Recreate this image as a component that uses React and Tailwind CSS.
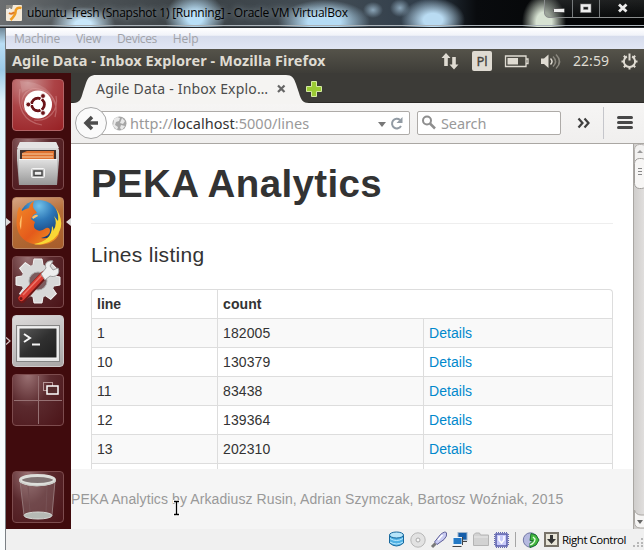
import React from "react";

const ubuntu = "font-['Noto_Sans','Open_Sans',sans-serif]";
const segoe = "font-['Open_Sans','Noto_Sans',sans-serif]";

function TitleBar() {
  return (
    <div className="relative h-[28px] shrink-0 border-b border-[#25292d] overflow-hidden bg-[radial-gradient(ellipse_32px_17px_at_83px_24px,#c9e8fb_25%,transparent),radial-gradient(ellipse_30px_26px_at_195px_18px,#b9e0f8_25%,transparent),radial-gradient(ellipse_46px_22px_at_324px_22px,#b5dcf5_35%,transparent),radial-gradient(ellipse_10px_8px_at_373px_10px,#8ba5b8,transparent),radial-gradient(ellipse_10px_9px_at_400px_8px,#8ba5b8,transparent),radial-gradient(ellipse_32px_22px_at_433px_20px,#b9dbf2_30%,transparent),radial-gradient(ellipse_22px_28px_at_544px_22px,#d7e2d2_35%,transparent),linear-gradient(90deg,#6b6e70,#4e5458_12%,#3b4145_30%,#434d55_50%,#303d4a_66%,#090b0e_74%,#020303)]">
      <div className={"flex h-[26px] items-center pl-[6px] border-b border-[#aab2b8] " + segoe}>
        <svg width="16" height="16" viewBox="0 0 16 16" className="shrink-0">
          <rect width="16" height="16" rx="1" fill="#f5ead8" />
          <path d="M0 0h7l-1 4H0z" fill="#8b8983" />
          <path d="M1 5l4 1M4 3l-2 4" stroke="#eee" strokeWidth="1.5" />
          <path d="M15.500 3c-4-1-6 1-6 4s-2 5-5 8" fill="none" stroke="#ef9c22" strokeWidth="2.600" />
          <path d="M3 8q3 2 5-1" fill="none" stroke="#df7924" strokeWidth="2" />
        </svg>
        <span className="ml-[5px] text-[12px] leading-[26px] whitespace-nowrap text-black tracking-[-0.22px] [text-shadow:0_0_6px_#d7e8f2aa]">ubuntu_fresh (Snapshot 1) [Running] - Oracle VM VirtualBox</span>
      </div>
      <div className="absolute top-[-4px] left-[544px] flex h-[22px] w-[104px] rounded-b-[5px] border border-[#8a8d8d] bg-[linear-gradient(#62656555,#15181955)]">
        <div className="w-[28px] border-r border-[#777b7d]">
          <svg width="27" height="20"><rect x="8.500" y="11.500" width="11" height="4" rx="1" fill="#eee" stroke="#555" /></svg>
        </div>
        <div className="w-[27px] border-r border-[#777b7d]">
          <svg width="26" height="20"><rect x="9" y="8.500" width="7.500" height="5.500" fill="none" stroke="#555" strokeWidth="4" /><rect x="9" y="8.500" width="7.500" height="5.500" fill="none" stroke="#eee" strokeWidth="2.600" /></svg>
        </div>
        <svg width="46" height="20"><path d="M19 7.500l7.500 7m0-7l-7.500 7" stroke="#eee" strokeWidth="2.800" /></svg>
      </div>
    </div>
  );
}

function MenuBar() {
  return (
    <div className={"flex h-[21px] shrink-0 items-center gap-[16px] pl-[8px] text-[12px] text-[#a0a2a8] bg-[linear-gradient(#ffffff,#f1f3f9_35%,#d6dcec_38%,#e1e6f4)] " + segoe}>
      <span className="tracking-[-0.25px]">Machine</span><span className="tracking-[-0.3px]">View</span><span className="tracking-[-0.4px]">Devices</span><span className="tracking-[-0.1px]">Help</span>
    </div>
  );
}

function Panel() {
  return (
    <div className={"flex h-[24px] shrink-0 items-center pl-[6px] text-[#dfdbd2] bg-[linear-gradient(#55534a,#3e3d38)] " + ubuntu}>
      <span className="w-[432px] whitespace-nowrap text-[14.500px] font-bold tracking-[0.09px]">Agile Data - Inbox Explorer - Mozilla Firefox</span>
      <svg width="200" height="24" fill="none" className="shrink-0 overflow-visible">
        <path d="M2 4l4.500 5H3.800v8H.2V9h-2.700zM10 20.500l-4.500-5h2.700V8h3.600v7.500h2.700z" fill="#dfdbd2" />
        <rect x="28" y="2" width="20" height="20" rx="2" fill="#dfdbd2" />
        <path d="M61.500 7h20.500v10.500H61.500zM82.500 10h1.500v4.500h-1.500" stroke="#dfdbd2" strokeWidth="1.300" />
        <rect x="63.500" y="9" width="10.500" height="6.500" fill="#dfdbd2" />
        <path d="M97 9.500h3l4.500-4V19l-4.500-4h-3z" fill="#dfdbd2" />
        <path d="M106.500 9.500q3 3 0 6" stroke="#dfdbd2" strokeWidth="1.500" />
        <path d="M109 7.500q5 5 0 10M112 5.500q7 7 0 14" stroke="#8b887f" strokeWidth="1.500" />
        <g stroke="#dfdbd2" strokeWidth="2" transform="translate(185.500 12.500)">
          <path d="M-2.600-5A5.600 5.600 0 1 0 2.600-5M0-8v7" />
          <path d="M-8 0h3M5 0h3M0 5v3M-5.700 5.700l2-2M5.700 5.700l-2-2M-5.700-5.700l2 2M5.700-5.700l-2 2" />
        </g>
        <text x="38" y="17" textAnchor="middle" fontSize="13" fill="#45433d" stroke="#45433d" strokeWidth=".3">Pl</text>
        <text x="129" y="17" fontSize="14" textLength="36" fill="#dfdbd2">22:59</text>
      </svg>
    </div>
  );
}

const tones = {
  wine: "border-[#7d4c4e] bg-[radial-gradient(ellipse_at_30%_0%,#9a7173,#5b2a2e_45%,#4b1418)]",
  red: "border-[#b36466] bg-[radial-gradient(circle_at_30%_5%,#c98f8f,#ac4346_45%,#972024)]",
  orange: "border-[#b88462] bg-[linear-gradient(160deg,#d7a583,#b66d37_45%,#a65c2b)]",
  grey: "border-[#cfcaca] bg-[linear-gradient(160deg,#dcdada,#a9a6a6)]",
};

function Tile({ children, tone = "wine", className = "" }) {
  return (
    <div className={"h-[52px] w-[52px] shrink-0 overflow-hidden rounded-[4px] border " + tones[tone] + " " + className}>
      <svg width="52" height="52" viewBox="0 0 52 52" className="-ml-px -mt-px" fill="none">{children}</svg>
    </div>
  );
}

const gearTeeth = [0, 45, 90, 135, 180, 225, 270, 315];

function Launcher() {
  return (
    <div className="relative flex w-[65px] shrink-0 flex-col gap-[7px] bg-[#400b0d] pl-[6px] pt-[6px]">
      <Tile tone="red">
        <path d="M8 2q33 1 36 27q-5-14-18-18q-10-3-16 3z" fill="#f2cccc" opacity=".2" />
        <path d="M14 33C4 22 14 7 27 10s20 13 16 28M8 10c-3 18 3 33 22 36M44 17c3 14-7 26-22 24" stroke="#e4a7a7" strokeOpacity=".4" strokeWidth="1.200" />
        <circle cx="26" cy="25.500" r="14" fill="#fff" />
        <circle cx="26" cy="25.500" r="6.300" stroke="#6b1418" strokeWidth="3" />
        <path d="M26 25.500h-9M26 25.500l4.500-8M26 25.500l4.500 8" stroke="#fff" strokeWidth="1.200" />
        <circle cx="26" cy="25.500" r="4.800" fill="#fff" />
        <g fill="#6b1418" stroke="#fff" strokeWidth=".8"><circle cx="16.300" cy="25.500" r="2.400" /><circle cx="31" cy="17" r="2.400" /><circle cx="31" cy="34" r="2.400" /></g>
      </Tile>
      <Tile>
        <defs><linearGradient id="metal" x1="0" y1="0" x2="0" y2="1"><stop stopColor="#e2e2e2" /><stop offset="1" stopColor="#979797" /></linearGradient></defs>
        <path d="M8 4h36l3 8v10l-2 25H7L5 22V12z" fill="url(#metal)" />
        <path d="M8 4h36l3 6H5z" fill="#e4e4e4" />
        <path d="M8 12h36v9H8z" fill="#43322c" />
        <path d="M10 21v-6l5-2h27v8z" fill="#df7230" /><path d="M10 16h31M10 19h31" stroke="#f7cfa5" />
        <path d="M7 21h38v26H7z" fill="url(#metal)" /><path d="M7 21.500h38" stroke="#f5f5f5" />
        <rect x="19.500" y="30.500" width="13" height="9" rx="1" fill="#ccc" stroke="#f4f4f4" />
        <rect x="22" y="33" width="8" height="4.500" fill="#eee" stroke="#444" strokeWidth="1.500" />
      </Tile>
      <Tile tone="orange">
        <defs>
          <radialGradient id="globe" cx=".5" cy=".15" r=".8"><stop stopColor="#72c1e9" /><stop offset=".45" stopColor="#2e78b8" /><stop offset="1" stopColor="#173b76" /></radialGradient>
          <linearGradient id="fox" x1="0" y1="0" x2="1" y2="1"><stop stopColor="#f38b28" /><stop offset=".55" stopColor="#e45a1b" /><stop offset="1" stopColor="#f0a224" /></linearGradient>
        </defs>
        <circle cx="27" cy="23" r="20" fill="url(#globe)" />
        <path d="M7 10q2 1 3 4 3-2 7-3 1-5 5-7-2 5 0 8 2 2 3 4-4 1-5 4l-1 2 4 3q-3 6 2 8 4 2 9-2 4-1 4 3 0 5-9 7 8 2 14-7 2-5 1-10 4 8 3 13C43 47 29 50 18 46 7 42 3 31 5 20q0-6 2-10z" fill="url(#fox)" />
        <path d="M43 10q9 12 5 23-4 11-17 14-6 1-9 0 18-3 18-18 2 2 1 5 5-7 1-15l4 5q1-8-3-14z" fill="#f8d735" />
        <path d="M20 20q5-4 6-1l-5 3zM10 18q-4 8-1 15" fill="#ffc06a" />
      </Tile>
      <Tile>
        <g transform="translate(26 25)" fill="#d8d8d8" stroke="#f2f2f2">
          {gearTeeth.map((a) => <path key={a} d="M-5.500-13l1.500-9h8l1.500 9z" transform={`rotate(${a})`} />)}
          <circle r="17" stroke="none" />
          <circle r="9" fill="#7c5b5d" stroke="#aaa" />
        </g>
        <path d="M10 43L32 19" stroke="#6e1817" strokeWidth="8" strokeLinecap="round" />
        <path d="M9.500 42L32 18" stroke="#d63b32" strokeWidth="6" strokeLinecap="round" />
        <path d="M11 39L30 19" stroke="#ed766a" strokeWidth="1.500" />
        <path d="M29 18l5-6c-2-5 2-8 7-7l-3 5 3 4 5-2c3 6-3 10-8 8l-5 4z" fill="#eee" stroke="#9d9d9d" />
        <circle cx="9" cy="42.500" r="1.500" fill="#6e1817" />
      </Tile>
      <Tile tone="grey">
        <defs><linearGradient id="screen" x1="0" y1="0" x2="1" y2="1"><stop stopColor="#5a5a5a" /><stop offset=".5" stopColor="#303030" /><stop offset="1" stopColor="#1f1f1f" /></linearGradient></defs>
        <rect x="4.500" y="10.500" width="43" height="36" fill="#e6e6e6" stroke="#858585" />
        <rect x="7" y="13" width="38" height="30" fill="url(#screen)" stroke="#f8f8f8" />
        <path d="M12 19l6 4-6 4M20 29.500h8" stroke="#f5f5f5" strokeWidth="2" />
      </Tile>
      <Tile>
        <path d="M26.500 2v48M2 26.500h48" stroke="#967173" />
        <rect x="31.500" y="8.500" width="9" height="8" stroke="#b89899" /><rect x="35" y="12" width="11" height="8" fill="#552b2d" stroke="#fff" strokeWidth="1.500" />
      </Tile>
      <Tile className="mt-[38px]">
        <path d="M8 10l4 34q14 6 28 0l3-34z" fill="#a69292" fillOpacity=".3" stroke="#937577" />
        <path d="M16 15l2 26M35 15l-1 26" stroke="#775255" />
        <ellipse cx="26" cy="44.500" rx="14" ry="3.500" fill="#b6bab5" stroke="#d7d8d5" />
        <ellipse cx="25.500" cy="9" rx="17" ry="4.500" fill="#817474" stroke="#dedfdb" strokeWidth="3" />
        <path d="M8 9v2q16 8 35 0V9" stroke="#c9cac6" strokeWidth="1" />
      </Tile>
      <div className="absolute left-0 top-[145px] h-0 w-0 border-y-[4px] border-l-[5px] border-y-transparent border-l-[#ddd]" />
      <div className="absolute right-0 top-[145px] h-0 w-0 border-y-[4px] border-r-[5px] border-y-transparent border-r-[#ddd]" />
      <svg className="absolute left-0 top-[263px]" width="6" height="10" fill="none"><path d="M0 1.500l4 3.500-4 3.500" stroke="#d9cccc" strokeWidth="1.200" /></svg>
    </div>
  );
}

function Tabs() {
  return (
    <div className="relative h-[30px] shrink-0 bg-[#3c3b37]">
      <svg className="absolute left-0 top-0" width="573" height="31">
        <path d="M0 29.500h573" stroke="#2c2b28" />
        <path d="M0 31v-1h2c7 0 8-4 10-11l3-9c2-6 5-8 10-8h190c6 0 8 3 10 9l3 9c2 7 4 10 10 10h3v1z" fill="#f5f4f2" />
        <path d="M207 12.500l6.500 6.500m0-6.500L207 19" stroke="#666" strokeWidth="2.200" />
        <path d="M240.500 8.500h5v5h5v5h-5v5h-5v-5h-5v-5h5z" fill="#9bcb34" stroke="#d4eaa2" />
      </svg>
      <span className={"absolute left-[25px] top-[6px] text-[14px] leading-[20px] whitespace-nowrap text-[#4c4c4c] tracking-[0.2px] " + ubuntu}>Agile Data - Inbox Explo…</span>
    </div>
  );
}

function NavBar() {
  return (
    <div className={"flex h-[41px] shrink-0 items-center border-b border-[#aaa7a3] bg-[linear-gradient(#f6f5f4,#f0efee)] text-[14.500px] " + ubuntu}>
      <div className="relative ml-[18px] mt-[-1px] flex h-[24px] w-[321px] items-center rounded-[2px] border border-[#aeaba8] bg-white pl-[40px]">
        <div className="absolute left-[-15px] top-[-5px] flex h-[32px] w-[32px] items-center justify-center rounded-full border border-[#a6a6a6] bg-[#fafafa]">
          <svg width="18" height="18" fill="none"><path d="M16 9H5M10 3L4 9l6 6" stroke="#4c4c4c" strokeWidth="3.500" /></svg>
        </div>
        <svg className="absolute left-[22px] top-[4px]" width="15" height="15"><circle cx="7.500" cy="7.500" r="7" fill="#a6a6a6" /><path d="M2 3l3-2 3 1-1 3-3 1-1 3 3 2-1 3-4-4zM10 2l3 3-2 3-3-1zM9 9l4 1-3 4-2-2z" fill="#e9e9e9" /></svg>
        <span className="mt-[2px] whitespace-nowrap text-[#999] tracking-[0.03px]">http://<span className="text-[#333]">localhost</span>:5000/lines</span>
        <svg className="absolute right-[4px] top-[3px]" width="30" height="16" fill="none"><path d="M3 7h8l-4 5z" fill="#777" /><path d="M25 5a4.800 4.800 0 1 0 1 6" stroke="#929ba4" strokeWidth="2" /><path d="M27.500 2v6h-6z" fill="#929ba4" /></svg>
      </div>
      <div className="ml-[7px] mt-[-1px] flex h-[24px] w-[144px] items-center gap-[5px] rounded-[2px] border border-[#aeaba8] bg-white pl-[4px] text-[#999]">
        <svg width="14" height="15" fill="none"><circle cx="5" cy="5.500" r="4" stroke="#8e8e8e" strokeWidth="2" /><path d="M8 8.500l5 5" stroke="#8e8e8e" strokeWidth="2.500" /></svg>
        <span className="mt-[2px] tracking-[-0.1px]">Search</span>
      </div>
      <svg width="83" height="40" fill="none" className="shrink-0"><path d="M17.500 15.500l4 4.500-4 4.500M23.500 15.500l4 4.500-4 4.500" stroke="#3f3f3f" strokeWidth="2.200" /><path d="M42.500 4v32" stroke="#c5c6cb" /><path d="M57.500 14.500h13M57.500 19.500h13M57.500 24.500h13" stroke="#484848" strokeWidth="3" strokeLinecap="round" /></svg>
    </div>
  );
}

const rows = [["1", "182005"], ["10", "130379"], ["11", "83438"], ["12", "139364"], ["13", "202310"]];

function Page() {
  return (
    <div className="flex min-h-0 flex-1 bg-white font-['Liberation_Sans',sans-serif] text-[14px] text-[#333]">
      <div className="flex w-[562px] shrink-0 flex-col">
        <div className="flex h-[325px] flex-col overflow-hidden pl-[20px] pr-[20px]">
          <h1 className="h-[80px] shrink-0 border-b border-[#eee] pt-[20px] text-[38.500px] font-bold leading-[40px] tracking-[0.36px]">PEKA Analytics</h1>
          <p className="pt-[16px] text-[21px] leading-[30px] tracking-[0.28px]">Lines listing</p>
          <div className="mt-[19px] flex-1 rounded-t-[4px] border border-b-0 border-[#ddd]">
            <div className="flex h-[28px] font-bold leading-[28px]"><div className="w-[126px] border-r border-[#ddd] pl-[5px]">line</div><div className="pl-[5px] tracking-[0.1px]">count</div></div>
            {rows.map(([line, count], i) => (
              <div key={line} className={"flex h-[29px] border-t border-[#ddd] leading-[28px] " + (i % 2 ? "bg-white" : "bg-[#f9f9f9]")}>
                <div className="w-[126px] border-r border-[#ddd] pl-[5px]">{line}</div>
                <div className="w-[206px] border-r border-[#ddd] pl-[5px] tracking-[0.1px]">{count}</div>
                <div className="pl-[5px] text-[#0088cc] tracking-[0.05px]">Details</div>
              </div>
            ))}
            <div className="flex h-[6px] border-t border-[#ddd]"><div className="w-[126px] border-r border-[#ddd]" /><div className="w-[206px] border-r border-[#ddd]" /></div>
          </div>
        </div>
        <div className="flex-1 whitespace-nowrap bg-[#f5f5f5] pt-[20px] leading-[20px] tracking-[0.096px] text-[#999]">PEKA Analytics by Arkadiusz Rusin, Adrian Szymczak, Bartosz Woźniak, 2015</div>
      </div>
      <div className="flex w-[11px] shrink-0 flex-col overflow-hidden border-l border-[#aaa7a3] bg-[linear-gradient(90deg,#cfcdcb,#e0dedd)]">
        <svg width="11" height="386" fill="none">
          <rect x=".5" y=".5" width="12" height="22" rx="5" fill="#f2f1f0" stroke="#b4b1ae" /><path d="M3 9l3-3 3 3z" fill="#999" />
          <rect x=".5" y="14.500" width="12" height="30" rx="5" fill="#f7f6f5" stroke="#a19e9b" /><path d="M4 24.500h4M4 27.500h4M4 30.500h4" stroke="#888" />
          <path d="M.5 366v12q0 6 6 6H12v-13H7q-5 0-6.500-5z" fill="#f6f5f4" stroke="#aaa7a3" /><path d="M3 376h6l-3 4z" fill="#666" />
        </svg>
      </div>
    </div>
  );
}

function IBeam() {
  return (
    <svg className="absolute left-[173px] top-[500px]" width="8" height="16" fill="none">
      <path d="M0 1.500h7M0 14.500h7M3.500 1v14" stroke="#fff" strokeWidth="3" />
      <path d="M1 1.500h2l.5.5.5-.5h2M1 14.500h2l.5-.5.5.5h2M3.500 2v12" stroke="#000" strokeWidth="1.300" />
    </svg>
  );
}

function StatusBar() {
  return (
    <div className="flex h-[21px] shrink-0 items-center bg-[#f0f0f0] pl-[382px]">
      <svg width="172" height="21" fill="none" className="shrink-0">
        <g fill="#50b1e4" stroke="#17689d"><path d="M1.500 6v8q7 6 14 0V6" /><ellipse cx="8.500" cy="6" rx="7" ry="3" fill="#b7e5fa" /><path d="M2 9.500q6.500 4 13 0M2 13q6.500 4 13 0" fill="none" stroke="#bceaff" /></g>
        <circle cx="30" cy="11" r="7.200" fill="#e2e2e2" stroke="#b7b7b7" /><circle cx="30" cy="11" r="2" fill="#f7f7f7" stroke="#aaa" />
        <path d="M46.500 13l6-7.500q5-4 6-1.500 1 3-2.500 6.500L49 15.500z" fill="#c9cbf2" stroke="#5d5d98" /><path d="M44 18l3.500-3.500" stroke="#777" strokeWidth="3" /><path d="M50 11l4.500-5" stroke="#fff" strokeWidth="1.500" />
        <rect x="70" y="3.500" width="9" height="7.500" fill="#155eaa" stroke="#9fb6cc" /><path d="M72 12.500h7" stroke="#444" /><rect x="65" y="8.500" width="9" height="7" fill="#2479c5" stroke="#eef6fc" /><path d="M64.500 17.500h9M74.500 8v8" stroke="#444" />
        <path d="M85.500 16.500V6l2-2h4l1 2h8v10.500z" fill="#d2d2d2" stroke="#b4b4b4" /><path d="M86 8h14" stroke="#e8e8e8" />
        <rect x="108" y="5" width="11" height="12" fill="#c9cbfa" stroke="#5459a8" strokeWidth="1.500" /><path d="M108 3.500h12M108 18.500h12M106.500 5v12M120.500 5v12" stroke="#666bb2" strokeDasharray="1 1" /><path d="M111 7v4l2.500 3 2.500-3V7" stroke="#fff" strokeWidth="1.500" />
        <path d="M127.500 3v15" stroke="#a5a5a5" />
        <circle cx="142.500" cy="11" r="7.200" fill="#b6bae0" stroke="#7177a5" /><path d="M143 4.500l5 1.500 3 5-3 5-6 2.500v-4l3-3h-3z" fill="#45b83f" stroke="#19722e" /><path d="M142 16q5-2 5-6l-2-2" stroke="#e4ffe4" strokeWidth="1.300" />
        <rect x="157" y="4" width="13" height="13" fill="#e8e5d8" stroke="#777268" strokeWidth="2" /><path d="M162 6h3v4h3l-4.500 5-4.500-5h3z" fill="#333" />
      </svg>
      <span className={"ml-[2px] text-[11.500px] whitespace-nowrap text-black tracking-[-0.48px] " + segoe}>Right Control</span>
      <svg className="ml-auto shrink-0" width="12" height="14"><path d="M9 5h2v2H9zM5 9h2v2H5zM9 9h2v2H9zM1 12h2v2H1zM5 12h2v2H5zM9 12h2v2H9z" fill="#b7b7b7" /></svg>
    </div>
  );
}

export default function App() {
  return (
    <div className="relative flex h-[550px] w-[644px] flex-col overflow-hidden bg-white">
      <TitleBar />
      <div className="flex min-h-0 flex-1">
        <div className="w-[6px] shrink-0 border-r border-[#7b8085] bg-[linear-gradient(#6f8797,#b9def5_3%,#9ccbe8_8%,#dff2fb_14%,#f4fcff_55%,#fafcfd)]" />
        <div className="flex w-[638px] flex-col">
          <MenuBar />
          <Panel />
          <div className="flex h-[456px] shrink-0">
            <Launcher />
            <div className="flex w-[573px] flex-col"><Tabs /><NavBar /><Page /></div>
          </div>
          <StatusBar />
        </div>
      </div>
      <IBeam />
    </div>
  );
}
